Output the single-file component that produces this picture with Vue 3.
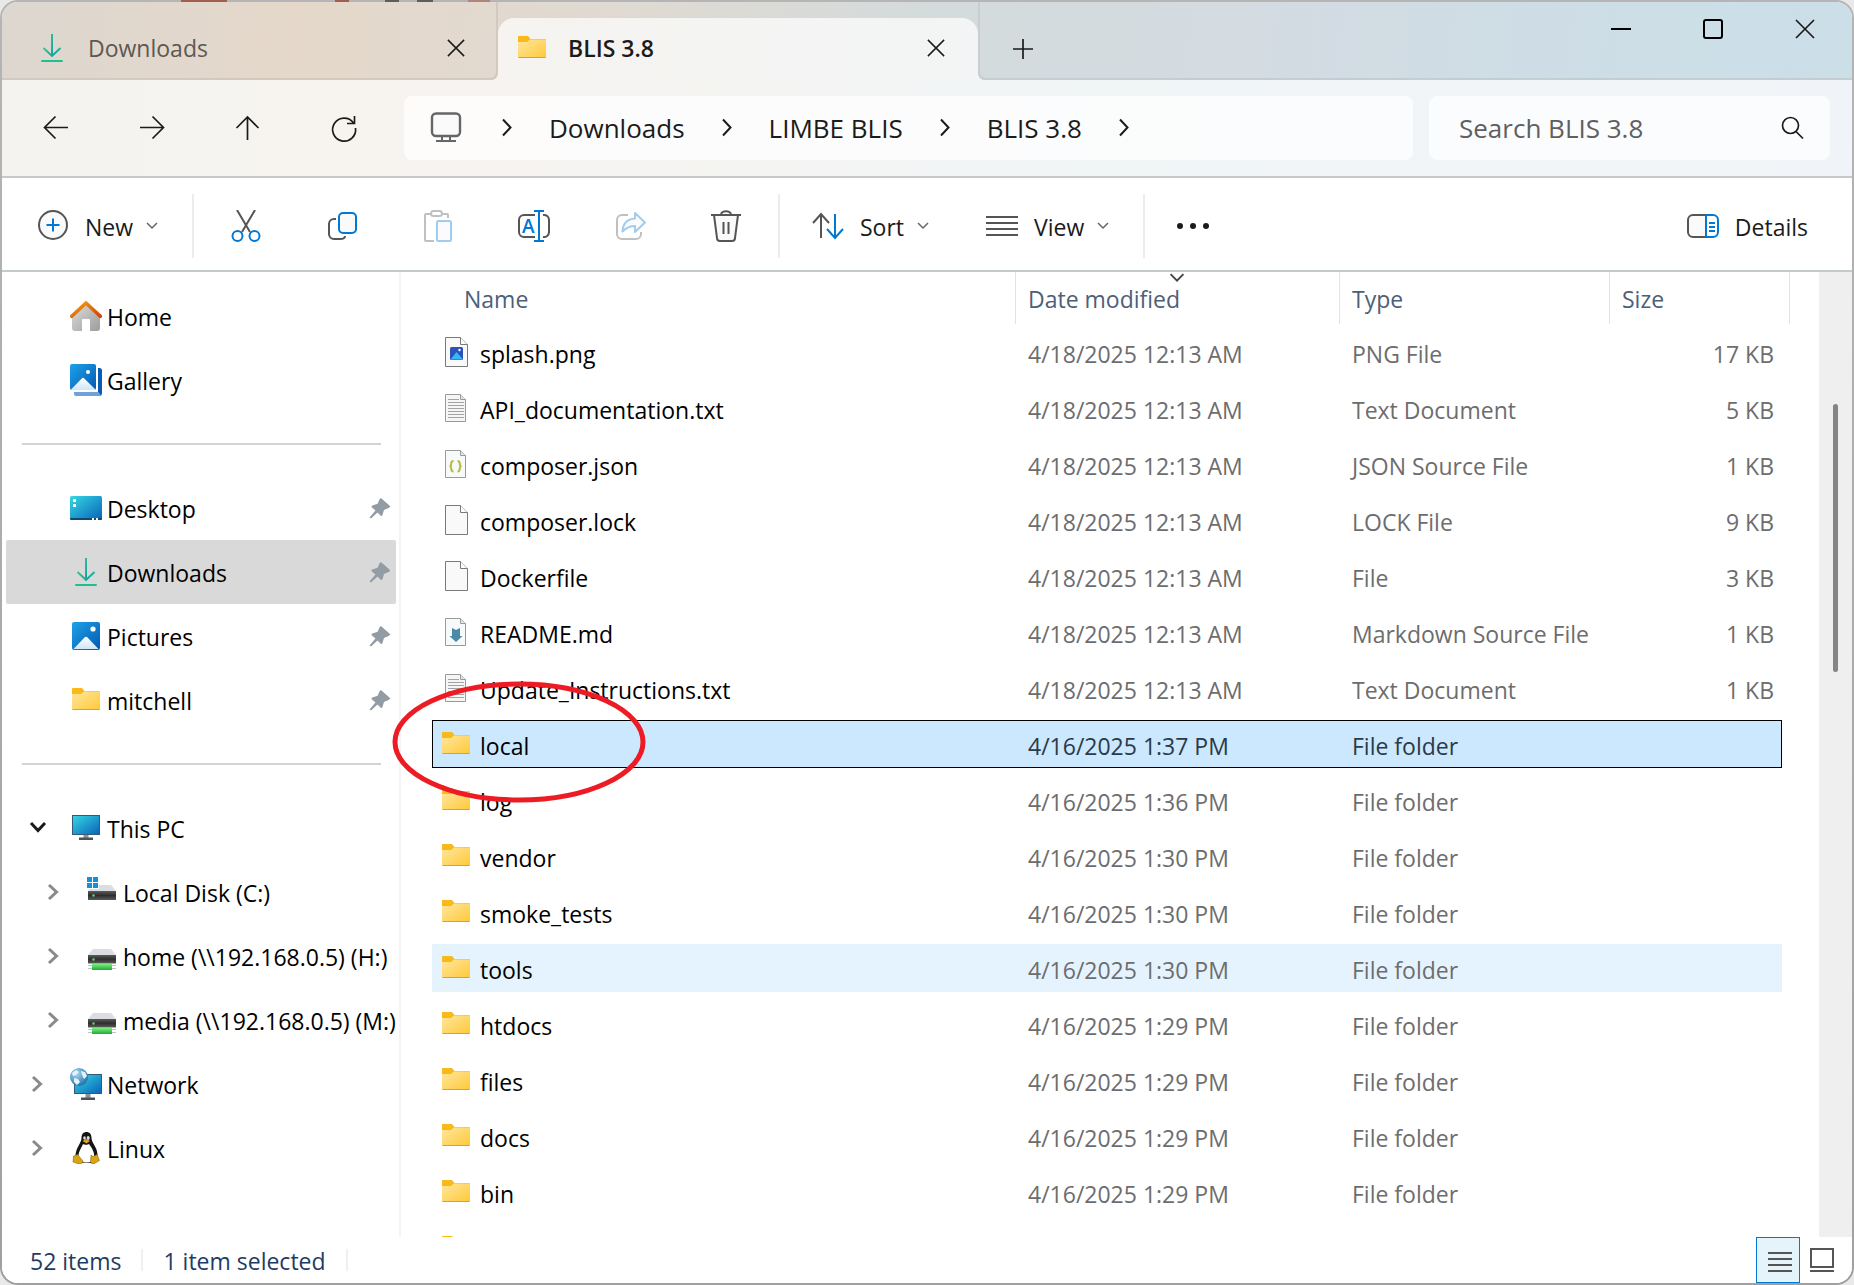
<script setup>
const pinned = [
  { label: 'Desktop', icon: 'desktop' },
  { label: 'Downloads', icon: 'download', current: true },
  { label: 'Pictures', icon: 'pictures' },
  { label: 'mitchell', icon: 'folder' },
]

const places = [
  { label: 'This PC', icon: 'pc', open: true },
  { label: 'Local Disk (C:)', icon: 'disk', child: true },
  { label: 'home (\\\\192.168.0.5) (H:)', icon: 'netdrive', child: true },
  { label: 'media (\\\\192.168.0.5) (M:)', icon: 'netdrive', child: true },
  { label: 'Network', icon: 'network' },
  { label: 'Linux', icon: 'linux' },
]

const crumbs = ['Downloads', 'LIMBE BLIS', 'BLIS 3.8']

const apr18 = '4/18/2025 12:13 AM'
const folder = (name, time) => ({
  name,
  icon: 'folder',
  date: `4/16/2025 ${time}`,
  type: 'File folder',
  size: '',
})

const files = [
  { name: 'splash.png', icon: 'file-png', date: apr18, type: 'PNG File', size: '17 KB' },
  { name: 'API_documentation.txt', icon: 'file-text', date: apr18, type: 'Text Document', size: '5 KB' },
  { name: 'composer.json', icon: 'file-json', date: apr18, type: 'JSON Source File', size: '1 KB' },
  { name: 'composer.lock', icon: 'file', date: apr18, type: 'LOCK File', size: '9 KB' },
  { name: 'Dockerfile', icon: 'file', date: apr18, type: 'File', size: '3 KB' },
  { name: 'README.md', icon: 'file-md', date: apr18, type: 'Markdown Source File', size: '1 KB' },
  { name: 'Update_Instructions.txt', icon: 'file-text', date: apr18, type: 'Text Document', size: '1 KB' },
  { ...folder('local', '1:37 PM'), selected: true },
  folder('log', '1:36 PM'),
  folder('vendor', '1:30 PM'),
  folder('smoke_tests', '1:30 PM'),
  { ...folder('tools', '1:30 PM'), hovered: true },
  folder('htdocs', '1:29 PM'),
  folder('files', '1:29 PM'),
  folder('docs', '1:29 PM'),
  folder('bin', '1:29 PM'),
]

const actions = [
  { label: 'Cut', icon: 'cut' },
  { label: 'Copy', icon: 'copy' },
  { label: 'Paste', icon: 'paste' },
  { label: 'Rename', icon: 'rename', letter: 'A' },
  { label: 'Share', icon: 'share' },
  { label: 'Delete', icon: 'trash' },
]
</script>

<template>
  <div class="desktop">
    <svg class="sprite" aria-hidden="true">
      <defs>
        <linearGradient id="g-green" x1="0" y1="0" x2="1" y2="1">
          <stop offset="0" stop-color="#35c98a" />
          <stop offset="1" stop-color="#0c9aa6" />
        </linearGradient>
        <linearGradient id="g-folder" x1="0" y1="0" x2="1" y2="1">
          <stop offset="0" stop-color="#ffe79e" />
          <stop offset="1" stop-color="#ffc938" />
        </linearGradient>
        <linearGradient id="g-screen" x1="0" y1="0" x2="1" y2="1">
          <stop offset="0" stop-color="#35d8e4" />
          <stop offset="1" stop-color="#0a62b8" />
        </linearGradient>
        <linearGradient id="g-photo" x1="0" y1="0" x2="1" y2="1">
          <stop offset="0" stop-color="#1ea2ea" />
          <stop offset="1" stop-color="#0459b0" />
        </linearGradient>
        <linearGradient id="g-hill" x1="0" y1="0" x2="0" y2="1">
          <stop offset="0" stop-color="#ffffff" />
          <stop offset="1" stop-color="#cfe6fa" />
        </linearGradient>
        <linearGradient id="g-roof" x1="0" y1="0" x2="1" y2="1">
          <stop offset="0" stop-color="#f7a00c" />
          <stop offset="1" stop-color="#cf4408" />
        </linearGradient>
        <linearGradient id="g-wall" x1="0" y1="0" x2="1" y2="1">
          <stop offset="0" stop-color="#dedede" />
          <stop offset="1" stop-color="#9c9c9c" />
        </linearGradient>
        <linearGradient id="g-drive" x1="0" y1="0" x2="0" y2="1">
          <stop offset="0" stop-color="#5b5b5b" />
          <stop offset="0.5" stop-color="#2e2e2e" />
          <stop offset="1" stop-color="#5a5a5a" />
        </linearGradient>
        <linearGradient id="g-cable" x1="0" y1="0" x2="0" y2="1">
          <stop offset="0" stop-color="#7af07c" />
          <stop offset="1" stop-color="#1fa83c" />
        </linearGradient>
        <radialGradient id="g-globe" cx="0.35" cy="0.3" r="0.75">
          <stop offset="0" stop-color="#a9dcf4" />
          <stop offset="1" stop-color="#1d6ea8" />
        </radialGradient>
      </defs>

      <symbol id="i-download" viewBox="0 0 32 32">
        <path d="M15 2h2v21h-2z" fill="url(#g-green)" />
        <path d="M7.5 16l8.500 8 8.500-8" fill="none" stroke="url(#g-green)" stroke-width="2" />
        <rect x="5" y="28" width="22" height="2" rx="1" fill="#1fbf94" />
      </symbol>
      <symbol id="i-folder" viewBox="0 0 32 32">
        <path d="M2 5a1 1 0 0 1 1-1h9l2.500 3H29a1 1 0 0 1 1 1v4H2z" fill="#fbb917" />
        <path d="M2 10h9l3-2.500h15a1 1 0 0 1 1 1V25a1 1 0 0 1-1 1H3a1 1 0 0 1-1-1z" fill="url(#g-folder)" />
        <path d="M2.500 25.500h27" stroke="#dfa11d" />
      </symbol>
      <symbol id="i-home" viewBox="0 0 32 32">
        <path d="M2 15L16 3l14 12v13a3 3 0 0 1-3 3h-7V20a1 1 0 0 0-1-1h-6a1 1 0 0 0-1 1v11H5a3 3 0 0 1-3-3z" fill="url(#g-wall)" />
        <path d="M1.700 16.300L16 3l14.300 13.300" fill="none" stroke="url(#g-roof)" stroke-width="3.600" stroke-linejoin="round" stroke-linecap="round" />
      </symbol>
      <symbol id="i-gallery" viewBox="0 0 32 32">
        <path d="M28 4h1.500A2.500 2.500 0 0 1 32 6.500V29a3 3 0 0 1-3 3l-2-3.500 1-1z" fill="#0a5bb5" />
        <path d="M4 28h24.500l2.500 3.500-2 .5H6a2 2 0 0 1-2-2z" fill="#6fa3d8" />
        <rect width="26" height="26" rx="2" fill="url(#g-photo)" />
        <path d="M1 25.500l10.500-10.800a2 2 0 0 1 3 0L25.500 25.500l-1 .5H2z" fill="url(#g-hill)" />
        <circle cx="18" cy="8" r="2" fill="#fff" />
      </symbol>
      <symbol id="i-pictures" viewBox="0 0 32 32">
        <rect x="2" y="2" width="28" height="28" rx="2" fill="url(#g-photo)" />
        <path d="M3.500 29L14.500 17.500a2 2 0 0 1 3 0L28.500 29z" fill="url(#g-hill)" />
        <circle cx="23" cy="9" r="2.600" fill="#fff" />
      </symbol>
      <symbol id="i-desktop" viewBox="0 0 32 32">
        <rect y="4" width="32" height="24" rx="1.500" fill="url(#g-screen)" />
        <path d="M0 26h32v.5a1.500 1.500 0 0 1-1.500 1.500h-29A1.500 1.500 0 0 1 0 26.500z" fill="#0b4a72" />
        <path d="M3 7h3v3H3zM3 12h3v3H3zM22 26h2v2h-2zM26 26h2v2h-2z" fill="#fff" />
      </symbol>
      <symbol id="i-pc" viewBox="0 0 32 32">
        <path d="M13.500 22h5v4h-5z" fill="#8b9299" />
        <path d="M9 25.500h14V28H9z" fill="#4b5258" />
        <rect x="2.500" y="3.500" width="27" height="19" fill="url(#g-screen)" stroke="#36597a" />
      </symbol>
      <symbol id="i-disk" viewBox="0 0 32 32">
        <path d="M7 9h18l5 6H2z" fill="#dcdde0" />
        <rect x="2" y="15" width="28" height="9" fill="url(#g-drive)" />
        <circle cx="7.500" cy="19.500" r="1.200" fill="#4be05a" />
        <path d="M0 0h13v13H0z" fill="#fff" />
        <path d="M1 1h5v5H1zM7 1h5v5H7zM1 7h5v5H1zM7 7h5v5H7z" fill="#1390dc" />
      </symbol>
      <symbol id="i-netdrive" viewBox="0 0 32 32">
        <path d="M7 9h18l5 6H2z" fill="#dcdde0" />
        <rect x="2" y="15" width="28" height="8.500" fill="url(#g-drive)" />
        <circle cx="7.500" cy="19.500" r="1.200" fill="#4be05a" />
        <path d="M2 25h28v1H2zM2 28h28v1H2z" fill="#b9c4bd" />
        <rect x="6" y="24" width="20" height="6" fill="url(#g-cable)" />
      </symbol>
      <symbol id="i-network" viewBox="0 0 32 32">
        <path d="M15.500 26h5v4h-5z" fill="#8b9299" />
        <path d="M11 29.500h14V32H11z" fill="#4b5258" />
        <rect x="4.500" y="6.500" width="27" height="19" fill="url(#g-screen)" stroke="#36597a" />
        <circle cx="9" cy="9" r="9" fill="url(#g-globe)" />
        <path d="M2 5l4-3 3 2-3 3-3 1zM11 3l4 1 2 4-3 3-2-4zM4 10l4 1 2 3-3 3-3-3z" fill="#e3f2fa" />
      </symbol>
      <symbol id="i-linux" viewBox="0 0 32 32">
        <path d="M11.500 6c0-4 2-6 5-6s5 2 5 6c0 5 6 9 6 17 0 4-2 7-4 8H9.500c-2-1-4-3-4-7 0-8 6-13 6-18z" fill="#141414" />
        <path d="M13 12c1 1 5 1 6 0 2 3 6 8 5 13-1 4-3 5.500-7.500 5.500S9 29 8.500 25C8 20 11.500 16 13 12z" fill="#fff" />
        <ellipse cx="14.500" cy="6" rx="1.300" ry="1.700" fill="#ddd" />
        <ellipse cx="18.200" cy="6" rx="1.500" ry="1.900" fill="#ddd" />
        <path d="M12.500 9l3.500-2 4 2-3.500 2.500z" fill="#e0a516" />
        <path d="M3.500 24l4-1.500L13 29c0 2-2 3-4 3l-6-2zM21 23l2 1.500 4-2 2.500 6-5 3c-2 1-4 0-4-2z" fill="#d9a313" stroke="#7a5a0a" stroke-width="0.500" />
      </symbol>

      <symbol id="i-file" viewBox="0 0 32 32">
        <path d="M5.500 1.500h15l7 7v22h-22z" fill="#f9f9f9" stroke="#7a7a7a" />
        <path d="M20.500 1.500v7h7" fill="#fff" stroke="#7a7a7a" />
      </symbol>
      <symbol id="i-file-png" viewBox="0 0 32 32">
        <path d="M5.500 1.500h15l7 7v22h-22z" fill="#f9f9f9" stroke="#7a7a7a" />
        <path d="M20.500 1.500v7h7" fill="#fff" stroke="#7a7a7a" />
        <rect x="10" y="11" width="13" height="13" rx="1.500" fill="#2a52b8" />
        <path d="M10.500 23.500l6-7.500 6.500 7.500z" fill="#35b8f5" />
        <circle cx="19.500" cy="14" r="1.200" fill="#fff" />
      </symbol>
      <symbol id="i-file-text" viewBox="0 0 32 32">
        <path d="M5.500 2.500h15l5 5v22h-20z" fill="#f6f6f6" stroke="#9a9a9a" />
        <path d="M20.500 2.500v5h5" fill="#e4e4e4" stroke="#9a9a9a" />
        <path d="M8 7.500h11M8 10.500h16M8 13.500h16M8 16.500h16M8 19.500h16M8 22.500h16M8 25.500h16" stroke="#a3a3a3" />
      </symbol>
      <symbol id="i-file-json" viewBox="0 0 32 32">
        <path d="M5.500 2.500h15l5 5v22h-20z" fill="#f6fafb" stroke="#9a9a9a" />
        <path d="M20.500 2.500v5h5" fill="#e4e4e4" stroke="#9a9a9a" />
        <path d="M13.500 13c-2 0-2.300.8-2.300 2.500s-.3 2.500-1.700 2.500c1.400 0 1.700.8 1.700 2.500s.3 3 2.300 3M17.500 13c2 0 2.300.8 2.300 2.500s.3 2.500 1.700 2.500c-1.400 0-1.700.8-1.700 2.500s-.3 3-2.300 3" fill="none" stroke="#bdb93d" stroke-width="2" />
      </symbol>
      <symbol id="i-file-md" viewBox="0 0 32 32">
        <path d="M5.500 2.500h15l5 5v22h-20z" fill="#f6fafb" stroke="#9a9a9a" />
        <path d="M20.500 2.500v5h5" fill="#e4e4e4" stroke="#9a9a9a" />
        <path d="M12 12l4 2 4-2v8h2.500L16 26l-6.500-6H12z" fill="#4a8aa6" />
      </symbol>

      <symbol id="i-new" viewBox="0 0 32 32">
        <circle cx="16" cy="15" r="14" fill="#fafafa" stroke="#555" stroke-width="2" />
        <path d="M16 8.500v13M9.500 15h13" stroke="#0078d4" stroke-width="2" />
      </symbol>
      <symbol id="i-cut" viewBox="0 0 32 32">
        <path d="M7 0l13 22M25 0L12 22" stroke="#555" stroke-width="2" />
        <circle cx="7.500" cy="26" r="5" fill="#fff" stroke="#0078d4" stroke-width="2" />
        <circle cx="24.500" cy="26" r="5" fill="#fff" stroke="#0078d4" stroke-width="2" />
      </symbol>
      <symbol id="i-copy" viewBox="0 0 32 32">
        <path d="M10 9H8a5 5 0 0 0-5 5v10a5 5 0 0 0 5 5h6c3 0 5-1 5-3" fill="none" stroke="#555" stroke-width="2" />
        <rect x="13" y="3" width="17" height="20" rx="4" fill="#fafafa" stroke="#0078d4" stroke-width="2" />
      </symbol>
      <symbol id="i-paste" viewBox="0 0 32 32">
        <path d="M9 4H4a1 1 0 0 0-1 1v25a1 1 0 0 0 1 1h8M21 4h4a1 1 0 0 1 1 1v3" fill="none" stroke="#c0c0c0" stroke-width="2" />
        <rect x="9" y="1" width="11" height="5" rx="2.500" fill="#fff" stroke="#c0c0c0" stroke-width="2" />
        <rect x="15" y="11" width="14" height="20" rx="1.500" fill="#fbfbfb" stroke="#9fcdf0" stroke-width="2" />
      </symbol>
      <symbol id="i-rename" viewBox="0 0 32 32">
        <path d="M17 27H6a5 5 0 0 1-5-5V10a5 5 0 0 1 5-5h11M25 5a5 5 0 0 1 6 5v12a5 5 0 0 1-6 5" fill="none" stroke="#555" stroke-width="2" />
        <path d="M16 1h10M16 31h10M21 1v30" stroke="#0078d4" stroke-width="2" />
      </symbol>
      <symbol id="i-share" viewBox="0 0 32 32">
        <path d="M14 5H8a5 5 0 0 0-5 5v14a5 5 0 0 0 5 5h14a5 5 0 0 0 5-5v-2" fill="none" stroke="#c0c0c0" stroke-width="2" />
        <path d="M21 3l10 9.500L21 22v-6c-6 0-9 2-12.500 5.500C9 13 13 9 21 8.500z" fill="#fbfbfb" stroke="#9fcdf0" stroke-width="2" stroke-linejoin="round" />
      </symbol>
      <symbol id="i-trash" viewBox="0 0 32 32">
        <path d="M4 5l3 23a3 3 0 0 0 3 3h12a3 3 0 0 0 3-3l3-23z" fill="#fafafa" stroke="#555" stroke-width="2" />
        <path d="M1 5h30M11 5c0-5 10-5 10 0M13.500 12v12M18.500 12v12" fill="none" stroke="#555" stroke-width="2" />
      </symbol>
      <symbol id="i-sort" viewBox="0 0 32 32">
        <path d="M9 5v23M1 13l8-9 8 9" fill="none" stroke="#555" stroke-width="2" />
        <path d="M23 4v23M15 19l8 9 8-9" fill="none" stroke="#0078d4" stroke-width="2" />
      </symbol>
      <symbol id="i-view" viewBox="0 0 32 32">
        <path d="M0 7h32M0 13h32M0 19h32M0 25h32" stroke="#555" stroke-width="2" />
      </symbol>
      <symbol id="i-more" viewBox="0 0 32 32">
        <circle cx="3" cy="16" r="3" fill="#1b1b1b" />
        <circle cx="16" cy="16" r="3" fill="#1b1b1b" />
        <circle cx="29" cy="16" r="3" fill="#1b1b1b" />
      </symbol>
      <symbol id="i-details" viewBox="0 0 32 32">
        <path d="M19 5H6a5 5 0 0 0-5 5v12a5 5 0 0 0 5 5h13" fill="#fafafa" stroke="#555" stroke-width="2" />
        <path d="M19 5h7a5 5 0 0 1 5 5v12a5 5 0 0 1-5 5h-7z" fill="#fff" stroke="#0078d4" stroke-width="2" />
        <path d="M22 13h6M22 17h6M22 21h6" stroke="#0078d4" stroke-width="2" />
      </symbol>
      <symbol id="i-monitor" viewBox="0 0 32 32">
        <path d="M12 24v5M20 24v5M6 29h20" stroke="#666" stroke-width="2" />
        <rect x="2" y="1.500" width="28" height="22.500" rx="4" fill="#fafafa" stroke="#666" stroke-width="2.400" />
      </symbol>
      <symbol id="i-tiles" viewBox="0 0 32 32">
        <path d="M5 5h22v18H5zM4 27h24" fill="none" stroke="#555" stroke-width="2" />
      </symbol>
      <symbol id="i-lines" viewBox="0 0 32 32">
        <path d="M4 9h24M4 15h24M4 21h24M4 27h24" stroke="#555" stroke-width="2" />
      </symbol>

      <symbol id="i-back" viewBox="0 0 32 32">
        <path d="M28 15.500H4M15.500 4.500l-11 11 11 11" fill="none" stroke="#1b1b1b" stroke-width="1.700" />
      </symbol>
      <symbol id="i-forward" viewBox="0 0 32 32">
        <path d="M4 15.500h24M16.500 4.500l11 11-11 11" fill="none" stroke="#1b1b1b" stroke-width="1.700" />
      </symbol>
      <symbol id="i-up" viewBox="0 0 32 32">
        <path d="M15.500 28V5M4.500 16l11-11 11 11" fill="none" stroke="#1b1b1b" stroke-width="1.700" />
      </symbol>
      <symbol id="i-refresh" viewBox="0 0 32 32">
        <path d="M26.500 4v7.500H19M25.500 11A11.500 11.500 0 1 0 27.500 16" fill="none" stroke="#1b1b1b" stroke-width="1.700" />
      </symbol>
      <symbol id="i-close" viewBox="0 0 20 20">
        <path d="M1 1l18 18M19 1L1 19" stroke="#1b1b1b" stroke-width="1.700" />
      </symbol>
      <symbol id="i-plus" viewBox="0 0 20 20">
        <path d="M10 0v20M0 10h20" stroke="#1b1b1b" stroke-width="1.700" />
      </symbol>
      <symbol id="i-min" viewBox="0 0 20 20">
        <path d="M0 10h20" stroke="#000" stroke-width="2" />
      </symbol>
      <symbol id="i-max" viewBox="0 0 20 20">
        <rect x="1" y="1" width="18" height="18" rx="2" fill="none" stroke="#000" stroke-width="2" />
      </symbol>
      <symbol id="i-search" viewBox="0 0 24 24">
        <circle cx="10.500" cy="9.500" r="8" fill="none" stroke="#1b1b1b" stroke-width="1.700" />
        <path d="M16 15.500l7 7" stroke="#1b1b1b" stroke-width="1.700" />
      </symbol>
      <symbol id="i-chevron" viewBox="0 0 20 20">
        <path d="M6 1.500l7.500 8L6 17.500" fill="none" stroke="currentColor" stroke-width="2" />
      </symbol>
      <symbol id="i-expand" viewBox="0 0 20 20">
        <path d="M5 3l7.500 7L5 17" fill="none" stroke="currentColor" stroke-width="3" />
      </symbol>
      <symbol id="i-caret" viewBox="0 0 14 14">
        <path d="M2 4l5 5 5-5" fill="none" stroke="currentColor" stroke-width="1.500" />
      </symbol>
      <symbol id="i-pin" viewBox="0 0 22 22">
        <path d="M12.500 1.500l8 7c1 1 .5 2-1 2.500l-4.500 2-1.500 5c-.4 1-1.200 1.200-2 .4L8.500 15.500 2 21.500 .5 20.500l6-7L3 10.500c-.8-.8-.6-1.600.4-2l5.200-1.700 2-4.500c.5-1.200 1.200-1.400 1.900-.8z" fill="#929ca4" />
      </symbol>
    </svg>

    <div class="frame">
      <div class="window">
        <header class="titlebar">
          <div class="tab">
            <button class="tab-name" type="button">
              <svg class="icon"><use href="#i-download" /></svg>
              <span>Downloads</span>
            </button>
            <button class="tab-close" type="button" aria-label="Close tab">
              <svg><use href="#i-close" /></svg>
            </button>
          </div>
          <div class="tab active">
            <button class="tab-name" type="button">
              <svg class="icon"><use href="#i-folder" /></svg>
              <span>BLIS 3.8</span>
            </button>
            <button class="tab-close" type="button" aria-label="Close tab">
              <svg><use href="#i-close" /></svg>
            </button>
          </div>
          <div class="strip">
            <button class="new-tab" type="button" aria-label="New tab">
              <svg><use href="#i-plus" /></svg>
            </button>
            <div class="controls">
              <button type="button" aria-label="Minimize"><svg><use href="#i-min" /></svg></button>
              <button type="button" aria-label="Maximize"><svg><use href="#i-max" /></svg></button>
              <button type="button" aria-label="Close"><svg><use href="#i-close" /></svg></button>
            </div>
          </div>
        </header>

        <nav class="navbar">
          <div class="nav-buttons">
            <button type="button" aria-label="Back"><svg class="icon"><use href="#i-back" /></svg></button>
            <button type="button" aria-label="Forward"><svg class="icon"><use href="#i-forward" /></svg></button>
            <button type="button" aria-label="Up"><svg class="icon"><use href="#i-up" /></svg></button>
            <button type="button" aria-label="Refresh"><svg class="icon"><use href="#i-refresh" /></svg></button>
          </div>
          <div class="address">
            <svg class="icon"><use href="#i-monitor" /></svg>
            <svg class="crumb-arrow"><use href="#i-chevron" /></svg>
            <template v-for="crumb in crumbs" :key="crumb">
              <a href="#">{{ crumb }}</a>
              <svg class="crumb-arrow"><use href="#i-chevron" /></svg>
            </template>
          </div>
          <form class="search" @submit.prevent>
            <input type="search" placeholder="Search BLIS 3.8" aria-label="Search BLIS 3.8" />
            <button type="submit" aria-label="Search"><svg><use href="#i-search" /></svg></button>
          </form>
        </nav>

        <div class="toolbar">
          <button class="tool new" type="button">
            <svg class="icon"><use href="#i-new" /></svg>
            <span>New</span>
            <svg class="caret"><use href="#i-caret" /></svg>
          </button>
          <div class="actions">
            <button v-for="action in actions" :key="action.icon" type="button" :aria-label="action.label">
              <svg class="icon" viewBox="0 0 32 32">
                <use :href="`#i-${action.icon}`" />
                <text v-if="action.letter" class="letter" x="4" y="23">{{ action.letter }}</text>
              </svg>
            </button>
          </div>
          <button class="tool sort" type="button">
            <svg class="icon"><use href="#i-sort" /></svg>
            <span>Sort</span>
            <svg class="caret"><use href="#i-caret" /></svg>
          </button>
          <button class="tool view" type="button">
            <svg class="icon"><use href="#i-view" /></svg>
            <span>View</span>
            <svg class="caret"><use href="#i-caret" /></svg>
          </button>
          <button class="more" type="button" aria-label="See more">
            <svg class="icon"><use href="#i-more" /></svg>
          </button>
          <button class="tool details" type="button">
            <svg class="icon"><use href="#i-details" /></svg>
            <span>Details</span>
          </button>
        </div>

        <div class="body">
          <aside class="sidebar">
            <ul>
              <li>
                <a class="place" href="#">
                  <span class="toggle"></span>
                  <svg class="icon"><use href="#i-home" /></svg>
                  <span class="label">Home</span>
                </a>
              </li>
              <li>
                <a class="place" href="#">
                  <span class="toggle"></span>
                  <svg class="icon"><use href="#i-gallery" /></svg>
                  <span class="label">Gallery</span>
                </a>
              </li>
              <li class="divider"></li>
              <li v-for="place in pinned" :key="place.label">
                <a class="place" :class="{ current: place.current }" href="#">
                  <span class="toggle"></span>
                  <svg class="icon"><use :href="`#i-${place.icon}`" /></svg>
                  <span class="label">{{ place.label }}</span>
                  <svg class="pin"><use href="#i-pin" /></svg>
                </a>
              </li>
              <li class="divider"></li>
              <li v-for="place in places" :key="place.label">
                <a class="place" :class="{ child: place.child }" href="#">
                  <svg class="toggle" :class="{ open: place.open }"><use href="#i-expand" /></svg>
                  <svg class="icon"><use :href="`#i-${place.icon}`" /></svg>
                  <span class="label">{{ place.label }}</span>
                </a>
              </li>
            </ul>
          </aside>

          <main class="files">
            <table>
              <colgroup>
                <col />
                <col class="col-date" />
                <col class="col-type" />
                <col class="col-size" />
              </colgroup>
              <thead>
                <tr>
                  <th scope="col">Name</th>
                  <th scope="col">
                    Date modified
                    <svg class="sorted"><use href="#i-caret" /></svg>
                  </th>
                  <th scope="col">Type</th>
                  <th scope="col">Size</th>
                </tr>
              </thead>
              <tbody>
                <tr
                  v-for="file in files"
                  :key="file.name"
                  :class="{ selected: file.selected, hovered: file.hovered }"
                >
                  <td>
                    <div class="name">
                      <svg class="icon"><use :href="`#i-${file.icon}`" /></svg>
                      <span>{{ file.name }}</span>
                    </div>
                    <svg v-if="file.selected" class="marker" viewBox="0 0 256 122">
                      <ellipse cx="127" cy="61" rx="124" ry="58" />
                    </svg>
                  </td>
                  <td>{{ file.date }}</td>
                  <td>{{ file.type }}</td>
                  <td class="size">{{ file.size }}</td>
                </tr>
                <tr>
                  <td colspan="4">
                    <div class="name"><svg class="icon"><use href="#i-folder" /></svg></div>
                  </td>
                </tr>
              </tbody>
            </table>
          </main>
          <div class="scrollbar"><div class="thumb"></div></div>
        </div>

        <footer class="status">
          <span>52 items</span>
          <span>1 item selected</span>
          <div class="modes">
            <button class="on" type="button" aria-label="Details view"><svg class="icon"><use href="#i-lines" /></svg></button>
            <button type="button" aria-label="Large icons view"><svg class="icon"><use href="#i-tiles" /></svg></button>
          </div>
        </footer>
      </div>
    </div>
  </div>
</template>

<style>
body {
  margin: 0;
}
</style>

<style scoped>
* {
  box-sizing: border-box;
}

.desktop {
  height: 100vh;
  background: #e9e9e9;
  font-family: "Open Sans", "Noto Sans", sans-serif;
  font-size: 23px;
  line-height: 32px;
  color: #000;
}

.sprite {
  position: absolute;
  width: 0;
  height: 0;
}

button {
  display: flex;
  align-items: center;
  justify-content: center;
  padding: 0;
  border: 0;
  background: none;
  font: inherit;
  color: #1b1b1b;
}

a {
  color: inherit;
  text-decoration: none;
}

svg {
  display: block;
  flex: none;
}

.icon {
  width: 32px;
  height: 32px;
}

.letter {
  font-size: 19px;
  font-weight: 600;
  fill: #0078d4;
}

.frame {
  height: 100%;
  padding: 2px;
  border-radius: 18px;
  background:
    linear-gradient(90deg, transparent 181px, #a0604f 181px 227px, transparent 227px 335px, #a0604f 335px 349px, transparent 349px 385px, #5f5c5c 385px 399px, transparent 399px 417px, #5f5c5c 417px 433px, transparent 433px 468px, #b0857a 468px 490px, transparent 490px) 0 0 / 100% 2px no-repeat,
    linear-gradient(#b5b5b5, #a0a0a0);
}

.window {
  display: flex;
  flex-direction: column;
  height: 100%;
  overflow: hidden;
  border-radius: 16px;
  background: #fff;
}

/* Title bar */
.titlebar {
  display: flex;
  flex: none;
  height: 78px;
  background: linear-gradient(95deg, #ddd7d0 0%, #e5d8ca 16%, #e2d9cf 26%, #dedad3 36%, #d4dbdc 50%, #d4dbe2 68%, #cfdde5 80%, #cbdfe8 100%);
}

.tab {
  display: flex;
  align-items: center;
  justify-content: space-between;
  width: 496px;
  padding: 16px 30px 0 34px;
  border-right: 2px solid #d3c9be;
  border-bottom: 2px solid #d3c9be;
  border-bottom-right-radius: 8px;
}

.tab-name {
  gap: 20px;
  color: #5c5853;
}

.tab-close {
  width: 20px;
  height: 20px;
}

.tab-close svg {
  width: 18px;
  height: 18px;
}

.tab.active {
  position: relative;
  width: 480px;
  margin-top: 16px;
  padding: 0 32px 2px 18px;
  border: 0;
  border-radius: 16px 16px 0 0;
  background: linear-gradient(90deg, #f6f3f0, #f4f4f2 40%, #f2f4f5);
  box-shadow: 0 -1px 1px #dcd8d4;
}

.tab.active::before,
.tab.active::after {
  content: "";
  position: absolute;
  bottom: 0;
  width: 6px;
  height: 6px;
}

.tab.active::before {
  right: 100%;
  background: radial-gradient(circle at 0 0, transparent 6px, #f6f3f0 6px);
}

.tab.active::after {
  left: 100%;
  background: radial-gradient(circle at 100% 0, transparent 6px, #f2f4f5 6px);
}

.tab.active .tab-name {
  color: #1b1b1b;
  font-weight: 600;
}

.strip {
  display: flex;
  flex: 1;
  justify-content: space-between;
  border-left: 2px solid #c8cfd1;
  border-bottom: 2px solid #c3ced3;
  border-bottom-left-radius: 8px;
}

.new-tab {
  width: 40px;
  margin: 18px 0 0 23px;
}

.new-tab svg,
.controls svg {
  width: 20px;
  height: 20px;
}

.controls {
  display: flex;
  height: 54px;
  padding-right: 1px;
}

.controls button {
  width: 92px;
}

/* Navigation bar */
.navbar {
  display: flex;
  flex: none;
  align-items: center;
  height: 98px;
  padding: 0 22px 0 6px;
  border-bottom: 2px solid #c6c9c8;
  background: linear-gradient(90deg, #f4f3ef 0%, #f7f3f0 22%, #f4f4f2 40%, #f2f4f5 50%, #f0f5f6 60%, #f0f4f8 100%);
  font-size: 26px;
}

.nav-buttons {
  display: flex;
}

.nav-buttons button {
  width: 96px;
  height: 64px;
}

.address,
.search {
  display: flex;
  align-items: center;
  height: 64px;
  border-radius: 8px;
  background: rgba(255, 255, 255, 0.75);
}

.address {
  flex: 1;
  margin-left: 12px;
  padding-left: 26px;
  color: #1b1b1b;
}

.address .icon {
  margin-right: 3px;
}

.crumb-arrow {
  width: 84px;
  height: 20px;
}

.search {
  width: 401px;
  margin-left: 16px;
  padding: 0 26px 0 30px;
}

.search input {
  flex: 1;
  min-width: 0;
  padding: 0;
  border: 0;
  background: none;
  font: inherit;
  outline: none;
}

.search input::placeholder {
  color: #5f5f5f;
  opacity: 1;
}

.search svg {
  width: 24px;
  height: 24px;
}

/* Command bar */
.toolbar {
  display: flex;
  flex: none;
  align-items: center;
  height: 94px;
  padding-top: 4px;
  border-bottom: 2px solid #c3cacc;
}

.toolbar button {
  height: 64px;
}

.tool {
  justify-content: flex-start;
  gap: 16px;
}

.tool span {
  padding-top: 2px;
}

.caret {
  width: 14px;
  height: 14px;
  margin-left: -4px;
  color: #666;
}

.new {
  width: 190px;
  padding-left: 35px;
}

.actions {
  display: flex;
  padding: 0 4px;
  border: solid #ececec;
  border-width: 0 2px;
}

.actions button {
  width: 96px;
}

.sort {
  width: 174px;
  padding-left: 32px;
}

.view {
  width: 191px;
  padding-left: 32px;
}

.toolbar .view {
  border-right: 2px solid #ececec;
}

.more {
  width: 96px;
}

.details {
  margin-left: auto;
  padding-right: 44px;
}

/* Body */
.body {
  display: flex;
  flex: 1;
  min-height: 0;
  overflow: hidden;
}

.sidebar {
  width: 399px;
  flex: none;
  padding: 12px 3px 0 4px;
  border-right: 2px solid #f4f4f4;
}

.sidebar ul {
  margin: 0;
  padding: 0;
  list-style: none;
}

.place {
  display: flex;
  align-items: center;
  height: 64px;
  padding-left: 22px;
  border-radius: 2px;
  white-space: nowrap;
}

.place.child {
  padding-left: 38px;
}

.place.current {
  background: #d9d9d9;
}

.toggle {
  width: 20px;
  height: 20px;
  margin-right: 22px;
  color: #8a8a8a;
}

.toggle.open {
  transform: rotate(90deg);
  color: #1b1b1b;
}

.label {
  padding: 2px 0 0 5px;
}

.pin {
  width: 22px;
  height: 22px;
  margin-left: auto;
  margin-right: 5px;
}

.divider {
  display: flex;
  align-items: center;
  height: 64px;
  padding: 0 15px 0 16px;
}

.divider::before {
  content: "";
  flex: 1;
  height: 2px;
  background: #d3d3d3;
}

.files {
  flex: 1;
  min-width: 0;
  padding: 0 37px 0 31px;
}

table {
  width: 100%;
  margin-top: -8px;
  table-layout: fixed;
  border-collapse: separate;
  border-spacing: 0 8px;
}

.col-date {
  width: 324px;
}

.col-type {
  width: 270px;
}

.col-size {
  width: 173px;
}

th,
td {
  position: relative;
  height: 48px;
  padding: 4px 0 0 13px;
  text-align: left;
  white-space: nowrap;
}

th {
  padding-top: 6px;
  font-weight: 400;
  color: #4c607a;
}

th:first-child {
  padding-left: 32px;
}

th + th::before,
th:last-child::after {
  content: "";
  position: absolute;
  top: 0;
  bottom: -4px;
  left: 0;
  width: 1px;
  background: #e3e3e3;
}

th:last-child::after {
  left: auto;
  right: -8px;
}

.sorted {
  position: absolute;
  top: -3px;
  left: 153px;
  width: 18px;
  height: 18px;
  color: #444;
}

td {
  color: #6d6d6d;
}

td:first-child {
  padding: 0 0 0 8px;
  color: #000;
}

td.size {
  padding-right: 8px;
  text-align: right;
}

.name {
  display: flex;
  align-items: center;
  gap: 8px;
}

.name span {
  padding-top: 4px;
}

.selected {
  background: #cce8ff;
  outline: 1px solid #000;
  outline-offset: -1px;
}

.selected td {
  color: #2b3a47;
}

.selected td:first-child {
  color: #000;
}

.hovered {
  background: #e5f3ff;
}

.marker {
  position: absolute;
  z-index: 1;
  top: -39px;
  left: -40px;
  width: 256px;
  height: 122px;
  fill: none;
  stroke: #ed1c24;
  stroke-width: 5px;
}

.scrollbar {
  width: 33px;
  flex: none;
  padding: 132px 14px 0;
  background: #efefef;
}

.thumb {
  height: 268px;
  border-radius: 3px;
  background: #858585;
}

/* Status bar */
.status {
  display: flex;
  flex: none;
  align-items: center;
  height: 46px;
  padding-left: 28px;
  background: #fff;
  color: #1f3b63;
}

.status > span {
  height: 22px;
  margin-right: 20px;
  padding-right: 20px;
  border-right: 2px solid #f0f0f0;
  line-height: 24px;
}

.modes {
  display: flex;
  align-self: stretch;
  gap: 6px;
  margin-left: auto;
  padding-right: 14px;
}

.modes button {
  width: 32px;
}

.modes .on {
  width: 44px;
  padding-left: 4px;
  border: 1px solid #0078d4;
  background: #e5f3fb;
}
</style>
